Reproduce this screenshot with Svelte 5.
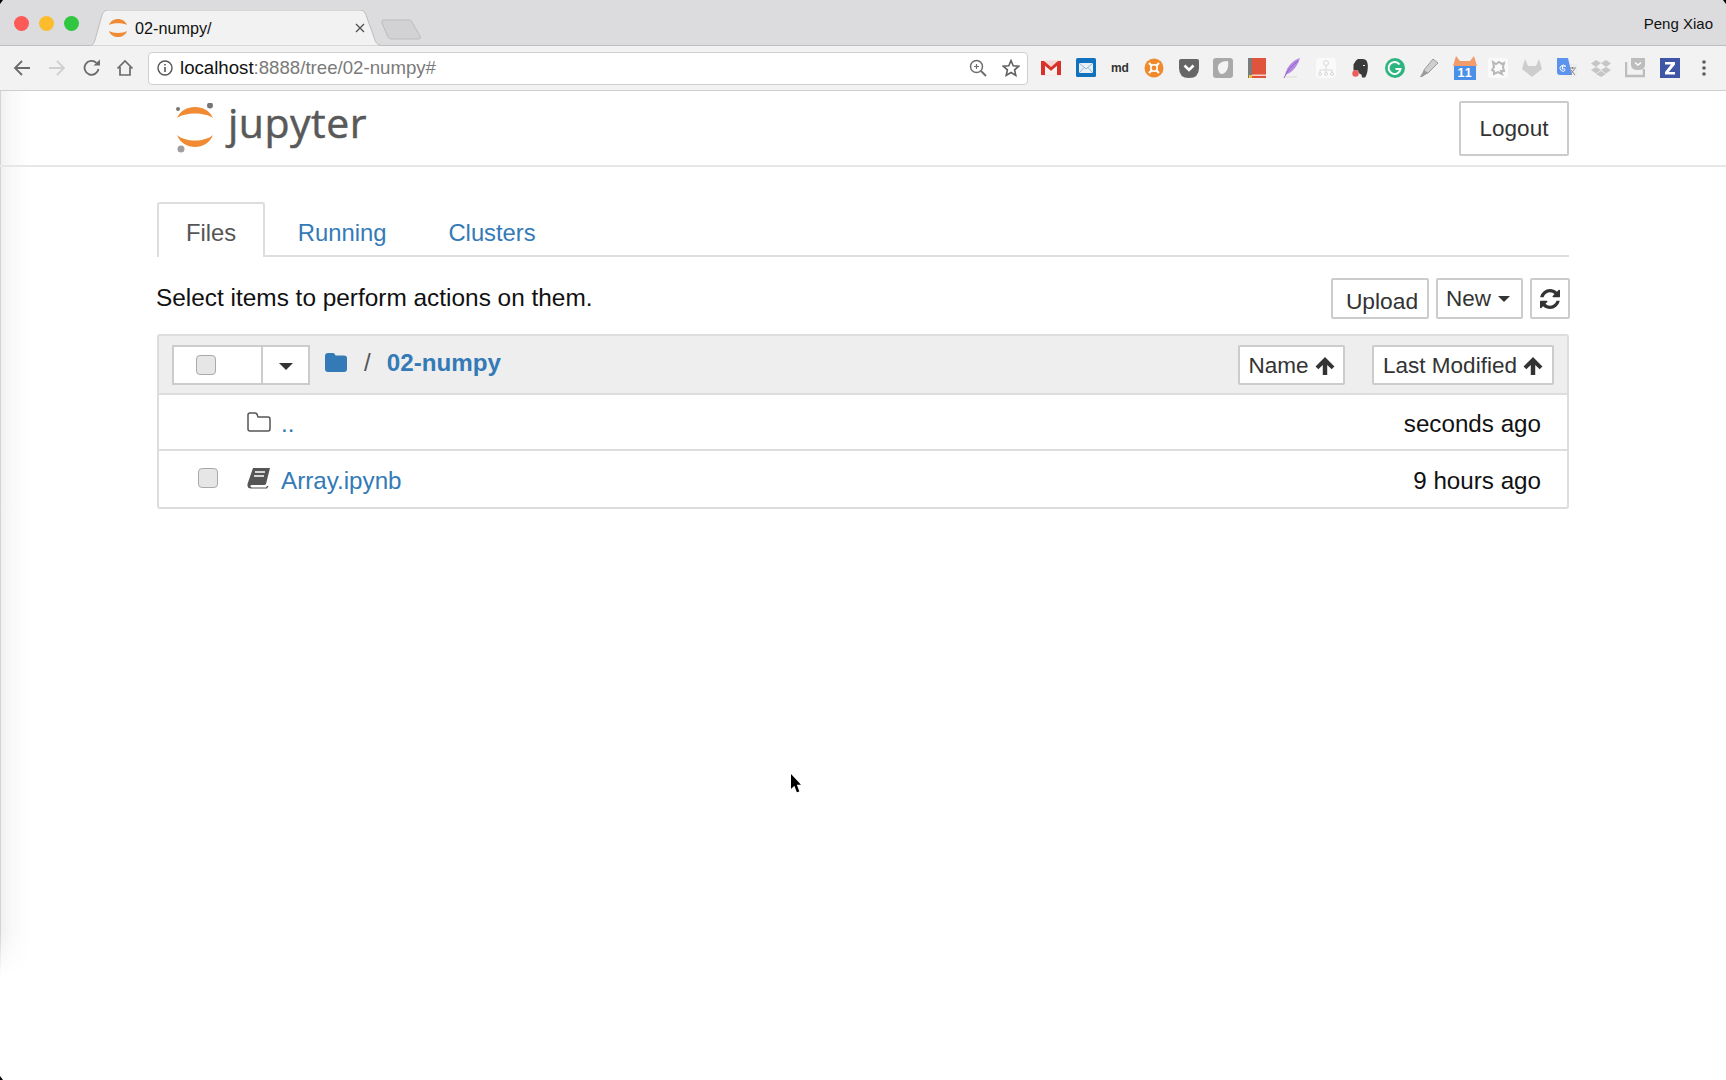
<script>
  const rows = [
    { name: '..', time: 'seconds ago', kind: 'up' },
    { name: 'Array.ipynb', time: '9 hours ago', kind: 'nb' }
  ];
</script>

<div class="app">
  <span class="corner tl"></span><span class="corner tr"></span><span class="corner bl"></span>
  <div class="tabstrip">
    <div class="lights">
      <span class="light red"></span><span class="light yellow"></span><span class="light green"></span>
    </div>
    <div class="tab">
      <svg class="tabshape" viewBox="0 0 297 36" preserveAspectRatio="none"><path d="M0 36 C5 36 6 33 7 30 L14 5 C15 2 17 0 20 0 L272 0 C275 0 277 2 278 5 L287 30 C288 33 290 36 297 36 Z" fill="#f2f2f2" stroke="#bdbdbd" stroke-width="1"/></svg>
      <svg class="favicon" viewBox="0 0 20 20" width="20" height="20"><path d="M1 7 C4 -1 16 -1 19 7 C15 4.500 5 4.500 1 7Z M1 13 C4 21 16 21 19 13 C15 15.500 5 15.500 1 13Z" fill="#f08a33"/></svg>
      <span class="tabtitle">02-numpy/</span>
      <svg class="tabclose" viewBox="0 0 10 10" width="10" height="10"><path d="M1 1 L9 9 M9 1 L1 9" stroke="#555" stroke-width="1.4"/></svg>
    </div>
    <svg class="newtab" viewBox="0 0 41 21" width="41" height="21"><path d="M1 2 Q1 1 3 1 L28 1 Q30 1 31 3 L39 17 Q40 20 38 20 L10 20 Q8 20 7 18 L1 4Z" fill="#d2d2d4" stroke="#bcbcbe"/></svg>
    <span class="user">Peng Xiao</span>
  </div>

  <div class="toolbar">
    <div class="nav">
      <svg viewBox="0 0 18 18" width="18" height="18"><path d="M17 9H2M9 2 L2 9 L9 16" fill="none" stroke="#6b6b6b" stroke-width="1.8"/></svg>
      <svg viewBox="0 0 18 18" width="18" height="18"><path d="M1 9H16M9 2 L16 9 L9 16" fill="none" stroke="#d0d0d0" stroke-width="1.8"/></svg>
      <svg viewBox="0 0 18 18" width="18" height="18"><path d="M15.500 10 A7 7 0 1 1 13.500 3.800" fill="none" stroke="#6b6b6b" stroke-width="1.8"/><path d="M10.500 6.500H17V0.500Z" fill="#6b6b6b"/></svg>
      <svg class="home" viewBox="0 0 18 18" width="18" height="18"><path d="M1.500 9.500 L9 2 L16.500 9.500 M4 8 V16 H14 V8" fill="none" stroke="#6b6b6b" stroke-width="1.7"/></svg>
    </div>
    <div class="omnibox">
      <svg class="info" viewBox="0 0 16 16" width="16" height="16"><circle cx="8" cy="8" r="7" fill="none" stroke="#555" stroke-width="1.4"/><path d="M8 7V12M8 4V5.600" stroke="#555" stroke-width="1.6"/></svg>
      <span class="url"><b>localhost</b>:8888/tree/02-numpy#</span>
      <svg class="zoomi" viewBox="0 0 18 18" width="18" height="18"><circle cx="7.500" cy="7.500" r="6" fill="none" stroke="#6e6e6e" stroke-width="1.5"/><path d="M12 12L17 17" stroke="#6e6e6e" stroke-width="1.9"/><path d="M5 7.500H10M7.500 5V10" stroke="#6e6e6e" stroke-width="1.2"/></svg>
      <svg class="star" viewBox="0 0 18 18" width="18" height="18"><path d="M9 1.500 L11.200 6.700 L16.800 7.200 L12.600 10.900 L13.800 16.400 L9 13.500 L4.200 16.400 L5.400 10.900 L1.200 7.200 L6.800 6.700Z" fill="none" stroke="#5f5f5f" stroke-width="1.6"/></svg>
    </div>
    <div class="exts">
      <span class="ext"><svg viewBox="0 0 20 16" width="20" height="16"><rect y="0.500" width="20" height="15" fill="#f3d9d6"/><path d="M0 1H3L10 7L17 1H20V15H16V6L10 11L4 6V15H0Z" fill="#d8322d"/><path d="M4 15V6L10 11L16 6V15Z" fill="#f7f1f0"/></svg></span>
      <span class="ext"><svg viewBox="0 0 20 20" width="20" height="20"><rect width="20" height="19" rx="1.500" fill="#1071bd"/><rect x="3" y="5" width="14" height="10" fill="#e8f0f6"/><path d="M3 5L10 11L17 5M3 15L8 9.500M17 15L12 9.500" fill="none" stroke="#8fb8d6" stroke-width="1"/></svg></span>
      <span class="ext md">md</span>
      <span class="ext"><svg viewBox="0 0 20 20" width="20" height="20"><circle cx="10" cy="10" r="9.500" fill="#f08a2c"/><circle cx="10" cy="10" r="3.200" fill="none" stroke="#fff" stroke-width="1.6"/><path d="M5 5L7.500 7.500M15 5L12.500 7.500M5 15L7.500 12.500M15 15L12.500 12.500" stroke="#fff" stroke-width="2.200"/></svg></span>
      <span class="ext"><svg viewBox="0 0 20 19" width="20" height="19"><path d="M0 1.500Q0 0 2 0H18Q20 0 20 1.500V9Q20 19 10 19Q0 19 0 9Z" fill="#666"/><path d="M5.500 6.500L10 11L14.500 6.500" fill="none" stroke="#fff" stroke-width="2.600"/></svg></span>
      <span class="ext"><svg viewBox="0 0 20 20" width="20" height="20"><rect width="20" height="20" rx="3" fill="#a9a9a9"/><path d="M5 11C4 6 8 3 15 3C16 9 14 15 9 16C7 16 5.500 14 5 11Z" fill="#f4f4f4"/></svg></span>
      <span class="ext"><svg viewBox="0 0 18 20" width="18" height="20"><rect width="18" height="20" fill="#e0533d"/><rect width="4" height="20" fill="#7b7b7b"/><rect x="4" y="16.500" width="14" height="1.500" fill="#f5d5cc"/><rect x="1" y="17" width="3" height="3" fill="#f2c23a"/></svg></span>
      <span class="ext"><svg viewBox="0 0 18 20" width="18" height="20"><path d="M17 0C10 2 4 8 2 17C8 15 14 10 17 0Z" fill="#b48be0"/><path d="M1 20C4 13 9 7 15 3" stroke="#8f5fce" stroke-width="1" fill="none"/><path d="M3 19H14" stroke="#ddd" stroke-width="1"/></svg></span>
      <span class="ext"><svg viewBox="0 0 20 20" width="20" height="20"><rect width="20" height="20" rx="4" fill="#fafafa"/><path d="M10 7V11M4 15V12H16V15M10 12V15" stroke="#d9d9d9" fill="none"/><circle cx="10" cy="5" r="2.500" fill="none" stroke="#d9d9d9"/><circle cx="4" cy="16" r="1.500" fill="none" stroke="#d9d9d9"/><circle cx="10" cy="16" r="1.500" fill="none" stroke="#d9d9d9"/><circle cx="16" cy="16" r="1.500" fill="none" stroke="#d9d9d9"/></svg></span>
      <span class="ext"><svg viewBox="0 0 16 19" width="16" height="19"><path d="M4 1.500L6 0H11C14 0 15.500 2 15.800 6C16 11 15 16 13 18.500H10L9.500 15.500C8 15.500 6.500 14 6 11.500H1.500V5.500Z" fill="#3a3a3a"/><path d="M11 6.500H13" stroke="#eee" stroke-width="1"/><circle cx="3.500" cy="14.500" r="3.200" fill="#ef5a5a"/></svg></span>
      <span class="ext"><svg viewBox="0 0 20 20" width="20" height="20"><circle cx="10" cy="10" r="10" fill="#2eb57f"/><path d="M14.500 6.500A6 6 0 1 0 15.500 11H10.500" fill="none" stroke="#fff" stroke-width="2"/></svg></span>
      <span class="ext"><svg viewBox="0 0 20 20" width="20" height="20"><path d="M14 1L19 5L9 15L5 16L5 12Z" fill="#cfcfcf" stroke="#9a9a9a"/><path d="M5 12L9 15L3 19L1 19Z" fill="#9a9a9a"/></svg></span>
      <span class="ext"><span class="cal"><svg viewBox="0 0 24 10" width="24" height="10"><path d="M3 0L7 5H17L21 0L24 10H0Z" fill="#f29c6b"/></svg><span class="calnum">11</span></span></span>
      <span class="ext"><svg viewBox="0 0 20 20" width="20" height="20"><rect width="20" height="20" rx="3" fill="#fafafa"/><path d="M5 4L8 6L11 4L14 6L16 5L15 9L16 13L13 13L14 16L10 14L6 16L6 13L4 12L6 9Z" fill="none" stroke="#b8b8b8" stroke-width="2"/></svg></span>
      <span class="ext"><svg viewBox="0 0 20 18" width="20" height="18"><path d="M0 10L3 0L6 7H14L17 0L20 10L10 18Z" fill="#cdcdcd"/></svg></span>
      <span class="ext"><svg viewBox="0 0 20 20" width="20" height="20"><rect x="8" y="6" width="12" height="13" fill="#ededed"/><path d="M0 0H11L15 17H3Q0 17 0 14Z" fill="#5b93ee"/><path d="M9 8H5.500V11H8M8.500 8.500A3 3 0 1 0 8.500 12" fill="none" stroke="#fff" stroke-width="1"/><path d="M12 10H19M15.500 9V11M13 17L17.500 11M14 12L18 17" stroke="#8a8a8a" fill="none" stroke-width="1"/></svg></span>
      <span class="ext"><svg viewBox="0 0 20 18" width="20" height="18"><path d="M5 1L10 4L5 8L0 4.500ZM15 1L20 4.500L15 8L10 4ZM5 8L10 11L5 14.500L0 11ZM15 8L20 11L15 14.500L10 11ZM5 15L10 12L15 15L10 18Z" fill="#c6c6c6"/></svg></span>
      <span class="ext"><svg viewBox="0 0 20 20" width="20" height="20"><path d="M1 4V18H19V11" fill="none" stroke="#bdbdbd" stroke-width="2.500"/><path d="M6 0H20V7Q20 12 13 12Q6 12 6 7Z" fill="#bdbdbd"/><path d="M10 4.500L13 7L16 4.500" stroke="#fff" stroke-width="1.500" fill="none"/></svg></span>
      <span class="ext"><svg viewBox="0 0 20 20" width="20" height="20"><rect width="20" height="20" fill="#3f55a5"/><path d="M5 4H15V6.500L8.800 14H15V16.500H5V14L11 6.500H5Z" fill="#fff"/></svg></span>
      <span class="ext"><svg viewBox="0 0 4 16" width="4" height="16"><circle cx="2" cy="2" r="1.800" fill="#5c5c5c"/><circle cx="2" cy="8" r="1.800" fill="#5c5c5c"/><circle cx="2" cy="14" r="1.800" fill="#5c5c5c"/></svg></span>
    </div>
  </div>

  <div class="page">
    <header class="head">
      <div class="logo">
        <svg viewBox="0 0 40 50" width="40" height="50">
          <path d="M2 15 C8 0.300 32 0.300 38 15 C30 9 10 9 2 15Z" fill="#f08a33"/>
          <path d="M2 32 C8 48 32 48 38 32 C30 39.300 10 39.300 2 32Z" fill="#f08a33"/>
          <circle cx="35" cy="2.500" r="3" fill="#767677"/>
          <circle cx="3" cy="6" r="2" fill="#767677"/>
          <circle cx="6" cy="46" r="3.500" fill="#9e9e9e"/>
        </svg>
        <span class="wordmark">jupyter</span>
      </div>
      <button class="btn logout">Logout</button>
    </header>

    <main class="container">
      <nav class="tabs">
        <a class="navtab active" href="#files">Files</a>
        <a class="navtab" href="#running">Running</a>
        <a class="navtab" href="#clusters">Clusters</a>
      </nav>

      <div class="actions">
        <span class="hint">Select items to perform actions on them.</span>
        <div class="actionbtns">
          <button class="btn upload"><span>Upload</span></button>
          <button class="btn new">New <i class="caret small"></i></button>
          <button class="btn refresh" aria-label="refresh">
            <svg viewBox="0 0 1536 1536" width="20" height="20"><path fill="#333" d="M1511 928q0 5-1 7-64 268-268 434.500t-478 166.500q-146 0-282.500-55t-243.500-157l-129 129q-19 19-45 19t-45-19-19-45v-448q0-26 19-45t45-19h448q26 0 45 19t19 45-19 45l-137 137q71 66 161 102t187 36q134 0 250-65t186-179q11-17 53-117 8-23 30-23h192q13 0 22.500 9.500t9.500 22.500zM1536 128v448q0 26-19 45t-45 19h-448q-26 0-45-19t-19-45 19-45l138-138q-148-137-349-137-134 0-250 65t-186 179q-11 17-53 117-8 23-30 23h-199q-13 0-22.500-9.500t-9.500-22.500v-7q65-268 270-434.500t480-166.500q146 0 284 55.500t245 156.500l130-129q19-19 45-19t45 19 19 45z"/></svg>
          </button>
        </div>
      </div>

      <section class="panel">
        <div class="panelhead">
          <div class="selectgroup">
            <span class="selcheck"><span class="cb"></span></span>
            <span class="selcaret"><i class="caret"></i></span>
          </div>
          <svg class="crumbfolder" viewBox="0 0 22 19" width="22" height="19"><path d="M0 3Q0 0 3 0H8Q10 0 10.500 2.500H19Q22 2.500 22 5V16Q22 19 19 19H3Q0 19 0 16Z" fill="#337ab7"/></svg>
          <span class="slash">/</span>
          <a class="crumb" href="#numpy">02-numpy</a>
          <div class="sorts">
            <button class="btn sort name">Name <svg viewBox="0 0 18 18" width="20" height="20"><path d="M9 1L17.500 9.500L15 12L11 8V17H7V8L3 12L0.500 9.500Z" fill="#333"/></svg></button>
            <button class="btn sort modified">Last Modified <svg viewBox="0 0 18 18" width="20" height="20"><path d="M9 1L17.500 9.500L15 12L11 8V17H7V8L3 12L0.500 9.500Z" fill="#333"/></svg></button>
          </div>
        </div>
        {#each rows as row}
          <div class="row {row.kind}">
            <span class="cbcell">{#if row.kind === 'nb'}<span class="cb"></span>{/if}</span>
            <span class="ricon">
              {#if row.kind === 'up'}
                <svg viewBox="0 0 24 20" width="24" height="20"><path d="M1 3Q1 1 3 1H8Q10 1 10.500 3.500L11 5H21Q23 5 23 7V17Q23 19 21 19H3Q1 19 1 17Z" fill="none" stroke="#555" stroke-width="1.500"/></svg>
              {:else}
                <svg viewBox="0 0 24 22" width="24" height="22"><path d="M6 1H23L19 17Q18.500 18 17 18H5Q3 18 3.500 19.500Q4 20.500 5 20.500H19L20 19L21.500 19L20 21.500H4Q0 21.500 0.500 17Z" fill="#555"/><path d="M8 5H18M7 9H17" stroke="#fff" stroke-width="1.500"/></svg>
              {/if}
            </span>
            <a class="fname" href="#f">{row.name}</a>
            <span class="time">{row.time}</span>
          </div>
        {/each}
      </section>
    </main>

    <svg class="cursor" viewBox="0 0 14 24" width="12" height="20"><path d="M1 0V18L5 14L8 22L11 21L8 13H13Z" fill="#000"/></svg>
  </div>
</div>

<style>
  :global(body) { margin: 0; background: #fff; }
  .app { position: relative; width: 1726px; height: 1080px; overflow: hidden; display: flex; flex-direction: column; font-family: "Liberation Sans", Arial, sans-serif; color: #000; }
  .corner { position: absolute; z-index: 2; width: 3px; height: 4px; background: #000; }
  .tl { left: 0; top: 0; clip-path: polygon(0 0, 100% 0, 0 100%); }
  .tr { right: 0; top: 0; clip-path: polygon(0 0, 100% 0, 100% 100%); }
  .bl { left: 0; bottom: 0; clip-path: polygon(0 0, 100% 100%, 0 100%); }

  .tabstrip { height: 46px; background: #dcdcde; box-sizing: border-box; border-bottom: 1px solid #bdbdbd; display: flex; align-items: flex-end; padding-left: 14px; }
  .lights { display: flex; gap: 10px; align-self: flex-start; padding-top: 16px; }
  .light { width: 15px; height: 15px; border-radius: 50%; }
  .red { background: #fc5a57; }
  .yellow { background: #fdbc2d; }
  .green { background: #30c63f; }
  .tab { position: relative; width: 297px; height: 36px; margin-left: 9px; margin-bottom: -1px; display: flex; align-items: center; padding-left: 20px; box-sizing: border-box; }
  .tabshape { position: absolute; inset: 0; width: 100%; height: 100%; }
  .favicon, .tabtitle, .tabclose { position: relative; }
  .tabtitle { margin-left: 7px; font-size: 16.200px; color: #111; }
  .tabclose { margin-left: auto; margin-right: 20px; }
  .newtab { margin-left: -4px; margin-bottom: 5px; }
  .user { margin-left: auto; margin-right: 13px; align-self: flex-start; padding-top: 15px; font-size: 15px; color: #111; }

  .toolbar { height: 45px; background: #f2f2f2; box-sizing: border-box; border-bottom: 1px solid #cfcfcf; display: flex; align-items: center; padding-left: 13px; }
  .nav { display: flex; gap: 17px; width: 135px; }
  .home { margin-left: -2px; }
  .omnibox { width: 880px; height: 33px; box-sizing: border-box; background: #fff; border: 1px solid #cfcfcf; border-radius: 4px; display: flex; align-items: center; padding: 0 7px 0 8px; }
  .url { margin-left: 7px; font-size: 18.650px; color: #7a7a7a; }
  .url b { font-weight: 400; color: #111; }
  .zoomi { margin-left: auto; margin-right: -1px; }
  .star { margin-left: 16px; }
  .exts { display: flex; margin-left: 6px; }
  .ext { width: 34.370px; display: flex; align-items: center; justify-content: center; }
  .md { font-size: 12px; font-weight: 700; color: #333; }
  .cal { display: flex; flex-direction: column; align-items: center; width: 24px; margin-left: 3px; }
  .calnum { width: 22px; height: 14px; background: #4a90e8; color: #fff; font-size: 12.500px; font-weight: 700; line-height: 14px; text-align: center; letter-spacing: 1px; }

  .page { position: relative; flex: 1; }
  .page::before { content: ""; position: absolute; left: 0; top: 0; width: 30px; height: 886px; box-sizing: border-box; border-left: 1.500px solid #d4d4d4; background: linear-gradient(to right, #f1f1f1, #f9f9f9 35%, #fff); -webkit-mask-image: linear-gradient(to bottom, #000 95%, transparent); mask-image: linear-gradient(to bottom, #000 95%, transparent); pointer-events: none; }
  .head { height: 76px; box-sizing: border-box; border-bottom: 2px solid #e7e7e7; display: flex; align-items: flex-start; justify-content: space-between; padding: 10px 157px 0 175px; position: relative; }
  .logo { display: flex; align-items: flex-start; gap: 13px; margin-top: 2px; }
  .wordmark { font-family: "Open Sans", sans-serif; font-size: 41px; line-height: 50px; color: #595959; letter-spacing: 0.500px; margin-top: -6px; -webkit-text-stroke: 0.500px #595959; }
  .btn { font-family: inherit; background: #fff; border: 2px solid #ccc; border-radius: 2px; color: #333; padding: 0; box-sizing: border-box; display: flex; align-items: center; justify-content: center; }
  .logout { width: 110px; height: 55px; font-size: 22.500px; }

  .container { position: relative; padding: 35px 157px 0; }
  .tabs { display: flex; height: 55px; box-sizing: border-box; border-bottom: 2px solid #ddd; }
  .navtab { font-size: 23.800px; color: #337ab7; text-decoration: none; height: 53px; line-height: 58px; margin-bottom: -2px; box-sizing: content-box; border: 2px solid transparent; border-bottom: 0; padding: 0 29px; }
  .navtab.active { color: #555; background: #fff; border-color: #ddd; border-radius: 3px 3px 0 0; padding: 0 27px; }
  .active + .navtab { margin-left: 1.500px; }
  .actions { display: flex; justify-content: space-between; align-items: flex-start; padding-top: 21px; height: 77px; box-sizing: border-box; }
  .hint { font-size: 24.400px; line-height: 39px; color: #111; margin-left: -1px; }
  .actionbtns { display: flex; gap: 7px; margin-right: -1px; }
  .upload { width: 98px; height: 41px; font-size: 22.800px; padding-top: 5px; padding-left: 4px; }
  .new { width: 87px; height: 41px; font-size: 22.500px; padding-right: 3px; }
  .refresh { width: 40px; height: 41px; }
  .caret { display: inline-block; width: 0; height: 0; border: 7px solid transparent; border-top-color: #333; border-bottom: 0; }
  .caret.small { margin-left: 7px; border-width: 6.500px; border-bottom: 0; }

  .panel { border: 2px solid #ddd; border-radius: 3px; }
  .panelhead { height: 59px; background: #eee; box-sizing: border-box; border-bottom: 2px solid #ddd; display: flex; align-items: center; padding-left: 13px; }
  .selectgroup { display: flex; height: 40px; box-sizing: border-box; border: 2px solid #ccc; background: #fff; }
  .selcheck { width: 89px; display: flex; align-items: center; padding-left: 22px; box-sizing: border-box; border-right: 2px solid #ccc; }
  .selcaret { width: 45px; display: flex; align-items: center; justify-content: center; padding-top: 3px; box-sizing: border-box; }
  .cb { display: block; width: 20px; height: 20px; box-sizing: border-box; background: #e6e6e6; border: 1.500px solid #a9a9a9; border-radius: 4px; }
  .crumbfolder { margin-left: 15px; margin-top: -5px; }
  .slash { margin-left: 17px; font-size: 24.200px; color: #555; margin-top: -3px; }
  .crumb { margin-left: 16px; font-size: 24.200px; font-weight: 700; color: #337ab7; text-decoration: none; margin-top: -3px; }
  .sorts { margin-left: auto; margin-right: 13px; display: flex; gap: 27px; }
  .sort { height: 40px; font-size: 22.500px; gap: 6px; padding-top: 2px; }
  .name { width: 107px; }
  .modified { width: 182px; }

  .row { height: 56px; box-sizing: border-box; border-bottom: 2px solid #ddd; padding-top: 4px; display: flex; align-items: center; font-size: 24.200px; }
  .row:last-child { border-bottom: 0; }
  .cbcell { width: 88px; box-sizing: border-box; padding-left: 39px; }
  .nb .cbcell { margin-bottom: 6px; }
  .ricon { width: 34px; display: flex; margin-bottom: 4px; }
  .nb .ricon { margin-bottom: 7px; }
  .fname { color: #337ab7; text-decoration: none; }
  .time { margin-left: auto; margin-right: 26px; color: #111; }
  .cursor { position: absolute; left: 790px; top: 683px; }
</style>
